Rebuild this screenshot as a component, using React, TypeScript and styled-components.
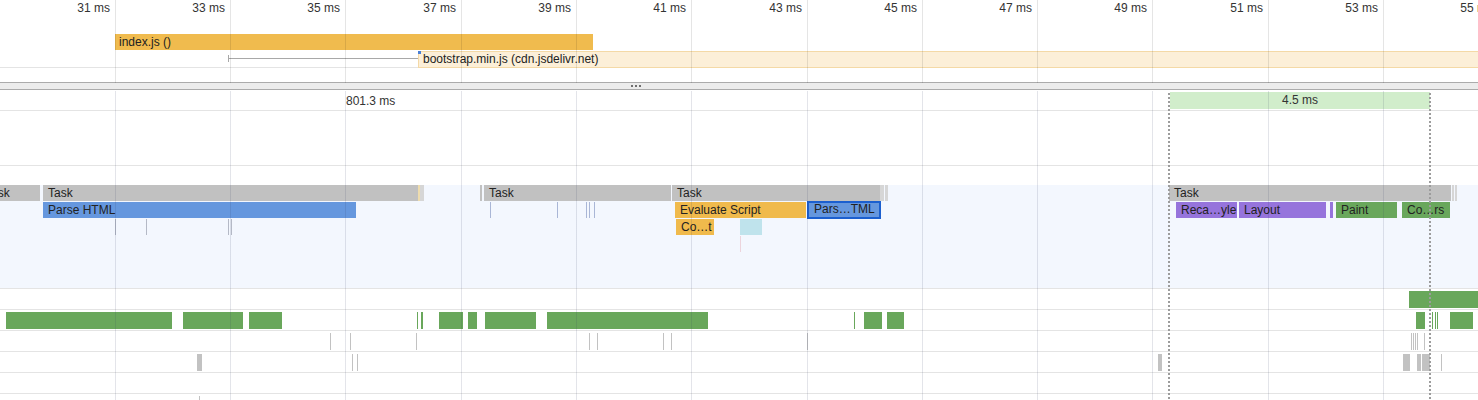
import React from "react";
import styled, { createGlobalStyle, css } from "styled-components";

const GlobalStyle = createGlobalStyle`
  html, body { margin: 0; padding: 0; background: #fff; }
  body { font-family: "Liberation Sans", Arial, sans-serif; font-size: 12px; color: #222; }
`;

const Page = styled.div`
  position: relative;
  width: 1478px;
  height: 400px;
  overflow: hidden;
  display: flex;
  flex-direction: column;
  background: #fff;
`;

/* ---------- ruler ---------- */
const Ruler = styled.div`
  position: relative;
  height: 33px;
  flex: none;
`;

const TickLabel = styled.span`
  position: absolute;
  top: 1px;
  transform: translateX(-100%);
  padding-right: 5px;
  font-size: 12px;
  line-height: 14px;
  color: #333;
  white-space: nowrap;
`;

/* ---------- grid overlay ---------- */
const GridOverlay = styled.div`
  position: absolute;
  inset: 0;
  pointer-events: none;
  z-index: 5;
`;

const GridLine = styled.div`
  position: absolute;
  top: 0;
  bottom: 0;
  width: 1px;
  background: linear-gradient(
    to bottom,
    rgba(0, 0, 0, 0.1) 0,
    rgba(0, 0, 0, 0.1) 83px,
    transparent 83px,
    transparent 91px,
    rgba(40, 50, 90, 0.13) 91px
  );
`;

const DottedLine = styled.div`
  position: absolute;
  top: 93px;
  bottom: 0;
  width: 2px;
  background: repeating-linear-gradient(
    to bottom,
    #9c9c9c 0,
    #9c9c9c 2px,
    transparent 2px,
    transparent 4px
  );
`;

/* ---------- tracks ---------- */
const Track = styled.div<{ $h: number; $border?: boolean }>`
  position: relative;
  flex: none;
  height: ${(p) => p.$h}px;
  ${(p) =>
    p.$border &&
    css`
      border-bottom: 1px solid #e4e4e4;
    `}
`;

const Spacer = styled.div<{ $h: number }>`
  flex: none;
  height: ${(p) => p.$h}px;
`;

const Divider = styled.div`
  flex: none;
  height: 6px;
  border-top: 1px solid #ababab;
  border-bottom: 1px solid #ababab;
  background: #ececec;
  display: flex;
  align-items: center;
  padding-left: 631px;
`;

const Grip = styled.div`
  display: flex;
  gap: 2px;
`;

const GripDot = styled.span`
  width: 2px;
  height: 2px;
  background: #6f6f6f;
`;

const ThreadHeader = styled.div`
  height: 19px;
  background: #fff;
`;

const FlameArea = styled.div`
  position: relative;
  height: 103px;
  background: #f3f7fe;
`;

type Kind =
  | "task"
  | "taskLight"
  | "script"
  | "parse"
  | "selected"
  | "style"
  | "paint"
  | "cyan"
  | "tick"
  | "tickGray"
  | "tickPink"
  | "yellowTick"
  | "green"
  | "gray";

const kindColor: Record<Kind, string> = {
  task: "#c1c1c1",
  taskLight: "#d6d6d6",
  script: "#f0ba4c",
  parse: "#6597de",
  selected: "#6597de",
  style: "#9674dc",
  paint: "#69a75c",
  cyan: "#bfe3ec",
  tick: "#a9b6d6",
  tickGray: "#b4b9c6",
  tickPink: "#ecd4dc",
  yellowTick: "#eedcae",
  green: "#69a75b",
  gray: "#c2c2c2",
};

const Bar = styled.div<{ $kind: Kind; $top: number; $h?: number }>`
  position: absolute;
  top: ${(p) => p.$top}px;
  height: ${(p) => p.$h ?? 16}px;
  box-sizing: border-box;
  background: ${(p) => kindColor[p.$kind]};
  overflow: hidden;
  ${(p) =>
    p.$kind === "selected" &&
    css`
      border: 2px solid #1b5fcf;
    `}
`;

const BarLabel = styled.span<{ $selected?: boolean }>`
  display: block;
  padding-left: 5px;
  font-size: 12px;
  line-height: ${(p) => (p.$selected ? 12 : 16)}px;
  color: #222;
  white-space: nowrap;
`;

const NetBar = styled.div<{ $kind: "main" | "pending"; $top: number }>`
  position: absolute;
  top: ${(p) => p.$top}px;
  height: 17px;
  box-sizing: border-box;
  padding-left: 4px;
  font-size: 12px;
  line-height: 16px;
  color: #222;
  white-space: nowrap;
  overflow: hidden;
  ${(p) =>
    p.$kind === "main"
      ? css`
          background: #f0bb4e;
          height: 16px;
        `
      : css`
          background: #fcefd8;
          border: 1px solid #f4d9a6;
          border-right: none;
          line-height: 15px;
        `}
`;

const Whisker = styled.div`
  position: absolute;
  top: 8px;
  height: 1px;
  background: #a8a8a8;
  &::before {
    content: "";
    position: absolute;
    left: 0;
    top: -3px;
    width: 1px;
    height: 7px;
    background: #a8a8a8;
  }
`;

const PriorityMark = styled.div`
  position: absolute;
  top: 1px;
  width: 3px;
  height: 3px;
  background: #4a7fd6;
  z-index: 2;
`;

const TimingText = styled.span`
  position: absolute;
  top: 4px;
  font-size: 12px;
  line-height: 14px;
  color: #333;
`;

const TimingBox = styled.div`
  position: absolute;
  top: 2px;
  height: 17px;
  background: #d1edcb;
  font-size: 12px;
  line-height: 17px;
  text-align: center;
  color: #333;
`;

/* ---------- data ---------- */
const ticks = [
  { x: 115, t: "31 ms" },
  { x: 230, t: "33 ms" },
  { x: 345, t: "35 ms" },
  { x: 461, t: "37 ms" },
  { x: 576, t: "39 ms" },
  { x: 691, t: "41 ms" },
  { x: 807, t: "43 ms" },
  { x: 922, t: "45 ms" },
  { x: 1037, t: "47 ms" },
  { x: 1152, t: "49 ms" },
  { x: 1268, t: "51 ms" },
  { x: 1383, t: "53 ms" },
  { x: 1498, t: "55 ms" },
];

type B = { x: number; w: number; kind: Kind; top: number; h?: number; label?: string };

const flame: B[] = [
  // level 0: tasks
  { x: -20, w: 60, kind: "task", top: 0, label: "Task" },
  { x: 43, w: 375, kind: "task", top: 0, label: "Task" },
  { x: 418, w: 2, kind: "yellowTick", top: 0 },
  { x: 420, w: 4, kind: "taskLight", top: 0 },
  { x: 480, w: 2, kind: "task", top: 0 },
  { x: 484, w: 187, kind: "task", top: 0, label: "Task" },
  { x: 672, w: 208, kind: "task", top: 0, label: "Task" },
  { x: 880, w: 4, kind: "taskLight", top: 0 },
  { x: 885, w: 3, kind: "taskLight", top: 0 },
  { x: 1169, w: 282, kind: "task", top: 0, label: "Task" },
  { x: 1452, w: 2, kind: "taskLight", top: 0 },
  { x: 1455, w: 2, kind: "taskLight", top: 0 },
  // level 1
  { x: 43, w: 313, kind: "parse", top: 17, label: "Parse HTML" },
  { x: 490, w: 1, kind: "tick", top: 17 },
  { x: 557, w: 1, kind: "tick", top: 17 },
  { x: 586, w: 1, kind: "tick", top: 17 },
  { x: 589, w: 1, kind: "tick", top: 17 },
  { x: 594, w: 1, kind: "tick", top: 17 },
  { x: 675, w: 131, kind: "script", top: 17, label: "Evaluate Script" },
  { x: 807, w: 74, kind: "selected", top: 16, h: 18, label: "Pars…TML" },
  { x: 1176, w: 61, kind: "style", top: 17, label: "Reca…yle" },
  { x: 1239, w: 87, kind: "style", top: 17, label: "Layout" },
  { x: 1330, w: 3, kind: "style", top: 17 },
  { x: 1336, w: 61, kind: "paint", top: 17, label: "Paint" },
  { x: 1402, w: 48, kind: "paint", top: 17, label: "Co…rs" },
  // level 2
  { x: 115, w: 1, kind: "tickGray", top: 34 },
  { x: 146, w: 1, kind: "tickGray", top: 34 },
  { x: 228, w: 1, kind: "tickGray", top: 34 },
  { x: 231, w: 1, kind: "tickGray", top: 34 },
  { x: 676, w: 38, kind: "script", top: 34, label: "Co…t" },
  { x: 740, w: 22, kind: "cyan", top: 34 },
  // level 3
  { x: 740, w: 1, kind: "tickPink", top: 51 },
];

const rowA: B[] = [{ x: 1409, w: 69, kind: "green", top: 2, h: 17 }];

const rowB: B[] = [
  [6, 166],
  [183, 60],
  [249, 33],
  [417, 1],
  [421, 2],
  [439, 24],
  [468, 9],
  [485, 51],
  [547, 161],
  [854, 1],
  [864, 18],
  [887, 17],
  [1416, 9],
  [1432, 1],
  [1435, 1],
  [1437, 1],
  [1450, 23],
].map(([x, w]) => ({ x, w, kind: "green" as Kind, top: 2, h: 17 }));

const rowC: B[] = [330, 350, 416, 589, 597, 663, 671, 807, 1411, 1413, 1415, 1417, 1424].map(
  (x) => ({ x, w: 1, kind: "gray" as Kind, top: 2, h: 17 })
);

const rowD: B[] = [
  [197, 5],
  [352, 1],
  [357, 1],
  [1158, 4],
  [1403, 7],
  [1417, 4],
  [1422, 8],
  [1441, 1],
].map(([x, w]) => ({ x, w, kind: "gray" as Kind, top: 2, h: 17 }));

const rowF: B[] = [{ x: 199, w: 1, kind: "gray", top: 2, h: 10 }];

const renderBars = (bars: B[]) =>
  bars.map((b, i) => (
    <Bar key={i} $kind={b.kind} $top={b.top} $h={b.h} style={{ left: b.x, width: b.w }}>
      {b.label && <BarLabel $selected={b.kind === "selected"}>{b.label}</BarLabel>}
    </Bar>
  ));

export default function App() {
  return (
    <>
      <GlobalStyle />
      <Page>
        <Ruler>
          {ticks.map((t) => (
            <TickLabel key={t.t} style={{ left: t.x }}>
              {t.t}
            </TickLabel>
          ))}
        </Ruler>

        <Track $h={17}>
          <NetBar $kind="main" $top={1} style={{ left: 115, width: 478 }}>
            index.js ()
          </NetBar>
        </Track>
        <Track $h={17} $border>
          <Whisker style={{ left: 228, width: 190 }} />
          <PriorityMark style={{ left: 418 }} />
          <NetBar $kind="pending" $top={1} style={{ left: 418, width: 1060 }}>
            bootstrap.min.js (cdn.jsdelivr.net)
          </NetBar>
        </Track>
        <Spacer $h={14} />

        <Divider>
          <Grip>
            <GripDot />
            <GripDot />
            <GripDot />
          </Grip>
        </Divider>

        <Track $h={20} $border>
          <TimingText style={{ left: 346 }}>801.3 ms</TimingText>
          <TimingBox style={{ left: 1170, width: 260 }}>4.5 ms</TimingBox>
        </Track>
        <Track $h={54} $border />
        <Track $h={122} $border>
          <ThreadHeader />
          <FlameArea>{renderBars(flame)}</FlameArea>
        </Track>
        <Track $h={20} $border>
          {renderBars(rowA)}
        </Track>
        <Track $h={20} $border>
          {renderBars(rowB)}
        </Track>
        <Track $h={20} $border>
          {renderBars(rowC)}
        </Track>
        <Track $h={20} $border>
          {renderBars(rowD)}
        </Track>
        <Track $h={20} $border />
        <Track $h={20}>{renderBars(rowF)}</Track>

        <GridOverlay>
          {ticks.map((t) => (
            <GridLine key={t.t} style={{ left: t.x }} />
          ))}
          <DottedLine style={{ left: 1168 }} />
          <DottedLine style={{ left: 1429 }} />
        </GridOverlay>
      </Page>
    </>
  );
}
